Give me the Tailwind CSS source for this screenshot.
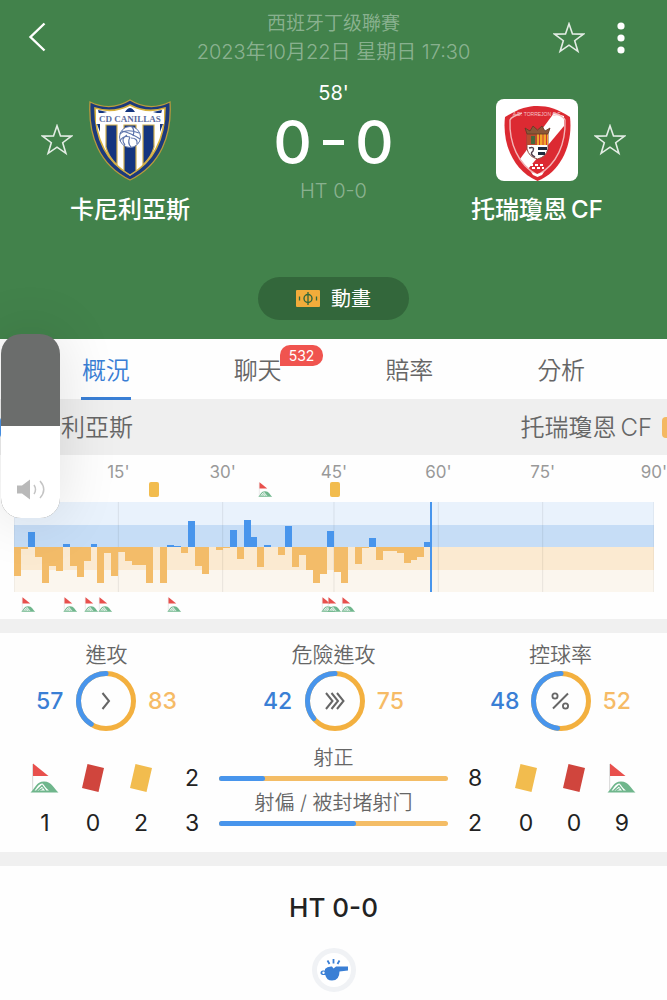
<!DOCTYPE html>
<html lang="zh-Hant">
<head>
    <meta charset="UTF-8">
    <meta name="viewport" content="width=device-width, initial-scale=1.0">
    <title>卡尼利亞斯 0-0 托瑞瓊恩CF</title>
    <script src="https://cdn.jsdelivr.net/npm/@tailwindcss/browser@4"></script>
</head>
<body class="relative min-h-screen overflow-x-hidden bg-[#fefefe] font-['Inter','Noto_Sans_CJK_TC',sans-serif] text-[#666]">

<!-- Shared icons -->
<svg class="hidden">
    <symbol id="star" viewBox="0 0 32 32">
        <path d="M16 1.8 L19.5 12 L30.4 12.1 L21.7 18.7 L24.9 29.4 L16 23.2 L7.1 29.4 L10.3 18.7 L1.6 12.1 L12.5 12 Z" fill="none" stroke="#fff" stroke-opacity=".85" stroke-width="1.6"/>
    </symbol>
    <symbol id="corner" viewBox="0 0 30 30">
        <path d="M2.6 1 V28" stroke="#ddd" stroke-width="1.2"/>
        <path d="M3 .5 L18.5 13 H3 Z" fill="#e8504d"/>
        <path d="M.5 29.5 C5 26 6 18.5 14 18.5 C22 18.5 24 26 28.5 29.5 Z" fill="#6fb68c"/>
        <path d="M4.5 27.5 C7 25 8 21 12.5 20.5 C14 21.5 15.5 25 19 27.5 Z" fill="#fff"/>
        <path d="M6.5 27.8 L12 22.5 L16 27.8 M9 27.5 L12.5 25.5" fill="none" stroke="#6fb68c" stroke-width="1.3"/>
    </symbol>
    <symbol id="card" viewBox="0 0 24 30">
        <path d="M6.5 1 L23 5 L17.5 29 L1 25 Z" fill="currentColor"/>
    </symbol>
</svg>

<!-- Header -->
<header class="h-[339px] bg-[#42824b] text-white">
    <div class="flex h-[76px] items-start justify-between">
        <button aria-label="返回" class="ml-6 mt-5 w-[104px]">
            <svg class="h-9 w-6" viewBox="0 0 24 36"><path d="M20.5 3.5 L6.5 17 L20.5 30.5" fill="none" stroke="#fff" stroke-width="2.4"/></svg>
        </button>
        <div class="pt-[10px] text-center font-[350] text-white/40">
            <p class="text-[19px] leading-7">西班牙丁级聯賽</p>
            <p class="text-xl leading-7 whitespace-nowrap">2023年10月22日 星期日 17:30</p>
        </div>
        <div class="mr-[42px] mt-[22px] flex w-[86px] items-center justify-end gap-8">
            <button aria-label="收藏比賽"><svg class="size-8"><use href="#star"/></svg></button>
            <button aria-label="更多">
                <svg class="h-8 w-2" viewBox="0 0 8 32" fill="#fff"><circle cx="4" cy="4" r="3.6"/><circle cx="4" cy="16" r="3.6"/><circle cx="4" cy="28" r="3.6"/></svg>
            </button>
        </div>
    </div>

    <div class="grid grid-cols-[39fr_22fr_39fr]">
        <!-- Home -->
        <div class="pt-[23px] text-center">
            <div class="flex items-center justify-center gap-4">
                <button aria-label="收藏卡尼利亞斯"><svg class="size-8"><use href="#star"/></svg></button>
                <svg class="size-[82px]" viewBox="0 0 82 82">
                    <path d="M1 3 Q22 13 41 1 Q60 13 81 3 C83 36 72 66 41 81 C10 66 -1 36 1 3 Z" fill="#1c3a7c" stroke="#b99b3c" stroke-width="1.3"/>
                    <path d="M6 9 Q24 15 41 6 Q58 15 76 9 C76 38 66 62 41 76 C16 62 6 38 6 9 Z" fill="#fff" stroke="#d8b13c" stroke-width="1.6"/>
                    <path d="M17 26 H28 V66 Q19 57 17 48 Z M35 26 H47 V72 L41 76 L35 72 Z M54 26 H65 V48 Q63 57 54 66 Z" fill="#14357f" stroke="#d0ae4d" stroke-width="1.2"/>
                    <path d="M8 25 L11 33 V25 Z M74 25 L71 33 V25 Z M36 13 Q41 5 46 13 Z M9 11 L18 13 L10 15 Z M73 11 L64 13 L72 15 Z" fill="#14357f"/>
                    <rect x="7" y="14" width="68" height="11" fill="#fff"/>
                    <text x="41" y="23" text-anchor="middle" font-family="Liberation Serif" font-weight="700" font-size="9" fill="#5b6c9e">CD CANILLAS</text>
                    <circle cx="41" cy="38" r="10.5" fill="#fff" stroke="#6077ad" stroke-width="1"/>
                    <path d="M31 35 Q37 29 50 34 M33 32 Q42 34 51 40 M41 38 Q34 36 31 42 M41 38 Q38 44 42 48 M38 36 Q31 40 36 46 M42 39 Q49 39 48 45 M44 37 Q46 31 43 28" fill="none" stroke="#5d74ab" stroke-width="1.2"/>
                </svg>
                <span class="w-8"></span>
            </div>
            <h2 class="mt-[11px] text-2xl leading-9 font-medium">卡尼利亞斯</h2>
        </div>

        <!-- Score -->
        <div class="text-center">
            <p class="mt-[3px] text-xl leading-7">58'</p>
            <p class="flex items-center justify-center gap-[3px] text-[60px] leading-[70px] font-medium"><span>0</span><span class="mx-2 h-[5px] w-[21px] bg-white"></span><span>0</span></p>
            <p class="text-xl leading-7 font-[350] text-white/40">HT 0-0</p>
        </div>

        <!-- Away -->
        <div class="pt-[23px] text-center">
            <div class="flex items-center justify-center gap-4">
                <span class="w-8"></span>
                <svg class="size-[82px] rounded-lg bg-white" viewBox="0 0 82 82">
                    <path d="M9 18 C22 10 31 7 41.5 7 C52 7 62 10 74 18 C77 44 66 72 41.5 82 C17 72 6 44 9 18 Z" fill="#dc2a32"/>
                    <path d="M58 14 L68 17 V27 L32 70 L24 60 Z" fill="#fff"/>
                    <path d="M41.5 76 C22 66 13 44 14 21 C15 18 20 16 26 14 M57 14 C62 15 68 18 69 21 C70 44 61 66 41.5 76" fill="none" stroke="#f3b4b6" stroke-width="1.4"/>
                    <text x="41" y="17" text-anchor="middle" font-family="Liberation Sans" font-size="5" textanchor="middle" fill="#f6c3c5">A.D. TORREJON C.F.</text>
                    <path d="M31 35 H52 V50 Q50 58 41.5 60 Q33 58 31 50 Z" fill="#fff" stroke="#8b4a3d" stroke-width="1"/>
                    <path d="M31 35 H41 V46 H31 Z" fill="#b94b30"/>
                    <path d="M35 37 h4 v8 h-4 z" fill="#44683b"/>
                    <path d="M41 35 H52 V46 H41 Z" fill="#f0a72c"/>
                    <path d="M43.5 35 V46 M47 35 V46 M50.5 35 V46" stroke="#d03a2e" stroke-width="1"/>
                    <path d="M42 48 H51 V51 H42 Z M42 53 H49 V56 H42 Z" fill="#1f2b3d"/>
                    <path d="M33 49 Q39 47 37 52 Q33 55 39 58" fill="none" stroke="#51414f" stroke-width="1.5"/>
                    <path d="M31 35 L29 29 L34 32 L37 27 L41.5 31 L46 27 L49 32 L54 29 L52 35 Z" fill="#8c5638" stroke="#5d3a26" stroke-width=".8"/>
                    <path d="M34 66 h3 M39 66 h3 M44 66 h3 M36 69 h3 M41 69 h3 M46 69 h2" stroke="#fff" stroke-width="2"/>
                    <path d="M35 73 L41 75 L48 73 L46 76 L41.5 78 L37 76 Z" fill="#fff"/>
                </svg>
                <button aria-label="收藏托瑞瓊恩CF"><svg class="size-8"><use href="#star"/></svg></button>
            </div>
            <h2 class="mt-[11px] text-2xl leading-9 font-medium">托瑞瓊恩<span class="ml-1">CF</span></h2>
        </div>
    </div>

    <button class="mx-auto mt-[49px] flex h-[43px] w-[151px] items-center justify-center gap-[11px] rounded-full bg-[#33673b] text-xl">
        <svg class="h-[17px] w-6" viewBox="0 0 24 17">
            <rect width="24" height="17" rx="1" fill="#f1ac3b"/>
            <path d="M12 2 V15 M3.5 6.5 V10.5 M20.5 6.5 V10.5" stroke="#33673b" stroke-width="1.3"/>
            <circle cx="12" cy="8.5" r="4" fill="none" stroke="#33673b" stroke-width="1.4"/>
        </svg>
        動畫
    </button>
</header>

<!-- Tabs -->
<nav class="grid h-[60px] grid-cols-4 px-[30px] text-2xl font-[350]">
    <a href="#" class="flex justify-center text-[#3a7fd5]"><span class="h-[61px] border-b-3 border-[#3a7fd5] px-px pt-[13px] leading-[38px]">概況</span></a>
    <a href="#" class="flex justify-center pt-[13px] leading-[38px]"><span class="relative">聊天<span class="absolute -top-[7px] left-[46px] rounded-[10px] rounded-bl-none bg-[#f0544f] px-[9px] text-sm leading-[21px] font-normal text-white">532</span></span></a>
    <a href="#" class="flex justify-center pt-[13px] leading-[38px]">賠率</a>
    <a href="#" class="flex justify-center pt-[13px] leading-[38px]">分析</a>
</nav>

<!-- Team legend -->
<div class="flex h-14 items-center justify-between overflow-hidden bg-[#efefef] pt-px text-2xl font-[350]">
    <div class="-ml-5 flex items-center gap-3"><span class="size-[21px] rounded bg-[#4895ec]"></span>卡尼利亞斯</div>
    <div class="-mr-4 flex items-center gap-[10px]"><span>托瑞瓊恩<span class="ml-1">CF</span></span><span class="size-[21px] rounded bg-[#f4b862]"></span></div>
</div>

<!-- Pressure chart, one column per minute -->
<section class="h-[164px] pr-[13px] pl-[14px]">
    <div class="grid h-[27px] grid-cols-[repeat(92,minmax(0,1fr))] pt-[5px] text-[17px] leading-6 text-[#999]">
        <span class="col-start-[15] flex w-0 justify-center justify-self-end">15'</span>
        <span class="col-start-[30] flex w-0 justify-center justify-self-end">30'</span>
        <span class="col-start-[46] flex w-0 justify-center justify-self-end">45'</span>
        <span class="col-start-[61] flex w-0 justify-center justify-self-end">60'</span>
        <span class="col-start-[76] flex w-0 justify-center justify-self-end">75'</span>
        <span class="col-start-[92] flex w-0 justify-center justify-self-end">90'</span>
    </div>
    <div class="-mr-px ml-px grid h-5 grid-cols-[repeat(92,minmax(0,1fr))]">
        <span class="col-start-[20] flex w-0 justify-center justify-self-end"><i class="h-[15px] w-[10px] shrink-0 rounded-xs bg-[#f2bc4e]"></i></span>
        <span class="col-start-[36] flex w-0 justify-center justify-self-end"><svg class="size-[15px] shrink-0"><use href="#corner"/></svg></span>
        <span class="col-start-[46] flex w-0 justify-center justify-self-end"><i class="h-[15px] w-[10px] shrink-0 rounded-xs bg-[#f2bc4e]"></i></span>
    </div>
    <svg class="block h-[90px] w-full" viewBox="0 0 92 90" preserveAspectRatio="none" shape-rendering="crispEdges">
        <path d="M0 0 H92 V23 H0 Z" fill="#e9f2fc"/>
        <path d="M0 23 H92 V45 H0 Z" fill="#c6ddf6"/>
        <path d="M0 45 H92 V68 H0 Z" fill="#fbead1"/>
        <path d="M0 68 H92 V90 H0 Z" fill="#fbf6ee"/>
        <path d="M0 0 V90 M15 0 V90 M30 0 V90 M46 0 V90 M61 0 V90 M76 0 V90 M92 0 V90" stroke="#000" stroke-opacity=".08" vector-effect="non-scaling-stroke"/>
        <g id="bars"></g>
        <path d="M60 0 V90" stroke="#4895ec" stroke-width="2" vector-effect="non-scaling-stroke"/>
    </svg>
    <div class="-mr-px ml-px grid grid-cols-[repeat(92,minmax(0,1fr))] pt-[5px]">
        <span class="col-start-[2] row-start-1 flex w-0 justify-center justify-self-end"><svg class="size-[15px] shrink-0"><use href="#corner"/></svg></span>
        <span class="col-start-[8] row-start-1 flex w-0 justify-center justify-self-end"><svg class="size-[15px] shrink-0"><use href="#corner"/></svg></span>
        <span class="col-start-[11] row-start-1 flex w-0 justify-center justify-self-end"><svg class="size-[15px] shrink-0"><use href="#corner"/></svg></span>
        <span class="col-start-[13] row-start-1 flex w-0 justify-center justify-self-end"><svg class="size-[15px] shrink-0"><use href="#corner"/></svg></span>
        <span class="col-start-[23] row-start-1 flex w-0 justify-center justify-self-end"><svg class="size-[15px] shrink-0"><use href="#corner"/></svg></span>
        <span class="col-start-[45] row-start-1 flex w-0 justify-center justify-self-end"><svg class="size-[15px] shrink-0"><use href="#corner"/></svg></span>
        <span class="col-start-[46] row-start-1 flex w-0 justify-center justify-self-end"><svg class="size-[15px] shrink-0"><use href="#corner"/></svg></span>
        <span class="col-start-[48] row-start-1 flex w-0 justify-center justify-self-end"><svg class="size-[15px] shrink-0"><use href="#corner"/></svg></span>
    </div>
</section>

<div class="h-[14px] bg-[#f0f0f0]"></div>

<!-- Stats -->
<section class="h-[219px] pt-[6px]">
    <div class="flex justify-between px-9 text-center">
        <div class="w-[141px]">
            <h3 class="text-[21px] leading-8 font-[350]">進攻</h3>
            <div class="flex items-center justify-between text-[23px] font-medium">
                <span class="text-[#3a7fd5]">57</span>
                <svg class="size-[60px]" viewBox="0 0 60 60" fill="none">
                    <circle cx="30" cy="30" r="27.5" stroke="#f3b03f" stroke-width="5"/>
                    <circle cx="30" cy="30" r="27.5" stroke="#4895ec" stroke-width="5" stroke-linecap="round" pathLength="100" stroke-dasharray="41 100" transform="translate(60 0) scale(-1 1) rotate(-90 30 30)"/>
                    <path d="M26.5 22 L33 30 L26.5 38" stroke="#666" stroke-width="2"/>
                </svg>
                <span class="text-[#f6bb66]">83</span>
            </div>
        </div>
        <div class="w-[141px]">
            <h3 class="text-[21px] leading-8 font-[350]">危險進攻</h3>
            <div class="flex items-center justify-between text-[23px] font-medium">
                <span class="text-[#3a7fd5]">42</span>
                <svg class="size-[60px]" viewBox="0 0 60 60" fill="none">
                    <circle cx="30" cy="30" r="27.5" stroke="#f3b03f" stroke-width="5"/>
                    <circle cx="30" cy="30" r="27.5" stroke="#4895ec" stroke-width="5" stroke-linecap="round" pathLength="100" stroke-dasharray="36 100" transform="translate(60 0) scale(-1 1) rotate(-90 30 30)"/>
                    <path d="M21 22 L27.5 30 L21 38 M26.5 22 L33 30 L26.5 38 M32 22 L38.5 30 L32 38" stroke="#666" stroke-width="2"/>
                </svg>
                <span class="text-[#f6bb66]">75</span>
            </div>
        </div>
        <div class="w-[141px]">
            <h3 class="text-[21px] leading-8 font-[350]">控球率</h3>
            <div class="flex items-center justify-between text-[23px] font-medium">
                <span class="text-[#3a7fd5]">48</span>
                <svg class="size-[60px]" viewBox="0 0 60 60" fill="none">
                    <circle cx="30" cy="30" r="27.5" stroke="#f3b03f" stroke-width="5"/>
                    <circle cx="30" cy="30" r="27.5" stroke="#4895ec" stroke-width="5" stroke-linecap="round" pathLength="100" stroke-dasharray="48 100" transform="translate(60 0) scale(-1 1) rotate(-90 30 30)"/>
                    <path d="M37 22.5 L22 37.5" stroke="#666" stroke-width="2"/>
                    <circle cx="24" cy="25" r="2.6" stroke="#666" stroke-width="1.8"/>
                    <circle cx="34.5" cy="35" r="2.6" stroke="#666" stroke-width="1.8"/>
                </svg>
                <span class="text-[#f6bb66]">52</span>
            </div>
        </div>
    </div>

    <div class="flex items-start px-[21px] pt-3 text-center text-[23px] text-[#222]">
        <div class="grid w-36 grid-cols-3 justify-items-center pt-5">
            <svg class="size-[30px]"><use href="#corner"/></svg>
            <svg class="h-[30px] w-6 text-[#d0453d]"><use href="#card"/></svg>
            <svg class="h-[30px] w-6 text-[#f2bc4e]"><use href="#card"/></svg>
            <span class="pt-[14px] leading-8">1</span>
            <span class="pt-[14px] leading-8">0</span>
            <span class="pt-[14px] leading-8">2</span>
        </div>
        <div class="w-[54px] pt-[13px] leading-[45px]"><p>2</p><p>3</p></div>
        <div class="flex-1 text-xl font-[350] text-[#666]">
            <p class="pt-px leading-7">射正</p>
            <div class="mt-1 flex h-[5px] overflow-hidden rounded-full bg-[#f4bd66]"><span class="w-1/5 rounded-r-full bg-[#4895ec]"></span></div>
            <p class="mt-2 leading-7">射偏 / 被封堵射门</p>
            <div class="mt-1 flex h-[5px] overflow-hidden rounded-full bg-[#f4bd66]"><span class="w-3/5 rounded-r-full bg-[#4895ec]"></span></div>
        </div>
        <div class="w-[54px] pt-[13px] leading-[45px]"><p>8</p><p>2</p></div>
        <div class="grid w-36 grid-cols-3 justify-items-center pt-5">
            <svg class="h-[30px] w-6 text-[#f2bc4e]"><use href="#card"/></svg>
            <svg class="h-[30px] w-6 text-[#d0453d]"><use href="#card"/></svg>
            <svg class="size-[30px]"><use href="#corner"/></svg>
            <span class="pt-[14px] leading-8">0</span>
            <span class="pt-[14px] leading-8">0</span>
            <span class="pt-[14px] leading-8">9</span>
        </div>
    </div>
</section>

<div class="h-[14px] bg-[#f0f0f0]"></div>

<!-- Timeline -->
<section class="pt-6 text-center">
    <h3 class="text-[26px] leading-9 font-medium text-[#222]">HT 0-0</h3>
    <svg class="mx-auto mt-[22px] size-[44px]" viewBox="0 0 44 44">
        <circle cx="22" cy="22" r="19.5" fill="#fff" stroke="#f0f2f5" stroke-width="5"/>
        <path d="M13 21 Q15 18.5 19 18.5 H20 L21.5 20.5 L24 18.5 H36 V22.5 L27.5 23.5 Q27.5 32.5 20 32.5 Q14.5 32.5 13.3 27 H12 Q8.5 27 8.5 25 Q8.5 22.5 11 22.5 H13 Z" fill="#3a7fd5"/>
        <circle cx="11.5" cy="24.8" r="1.2" fill="#fff"/>
        <path d="M15.5 12.5 L17.5 16 M21.5 11 V15.5 M27.5 12.5 L25.5 16" stroke="#3a7fd5" stroke-width="1.8"/>
    </svg>
</section>

<!-- Volume overlay -->
<div class="absolute top-[334px] left-px h-[184px] w-[59px] overflow-hidden rounded-[20px] bg-[#6b6d6c] shadow-[0_0_60px_rgba(0,0,0,0.12)]">
    <div class="mt-[92px] flex h-[92px] items-end justify-center bg-white pb-[18px]">
        <svg class="h-[21px] w-[30px]" viewBox="0 0 30 21" fill="none">
            <path d="M1 6.5 H6 L14 .5 V20.5 L6 14.5 H1 Z" fill="#b9b9b9"/>
            <path d="M18 6 Q21 10.5 18 15 M24 2 Q31.5 10.5 24 19" stroke="#c4c4c4" stroke-width="1.5"/>
        </svg>
    </div>
    <input type="range" aria-label="音量" value="50" class="absolute inset-0 h-full w-full opacity-0">
</div>

<script>
    // above zero: home pressure, below zero: away pressure
    const pressure = [
        -29, -2, 15, -10, -36, -19, -24, 3, -19, -30, -14, 3, -36, -6, -29,
        -5, -14, -18, -18, -36, 0, -36, 2, 1, -6, 26, -19, -27, 0, -3,
        -1, 17, -12, 27, 10, -20, 2, 0, -8, 21, -20, -8, -23, -36, -27,
        16, -25, -36, 0, -17, -1, 9, -13, -4, -4, -6, -16, -13, -10, 5
    ];

    document.getElementById('bars').innerHTML = pressure.map((value, minute) => {
        const y = value > 0 ? 45 - value : 45;
        const color = value > 0 ? '#4895ec' : '#f3bc69';
        return `<rect x="${minute}" y="${y}" width="1" height="${Math.abs(value)}" fill="${color}"/>`;
    }).join('');
</script>
</body>
</html>
